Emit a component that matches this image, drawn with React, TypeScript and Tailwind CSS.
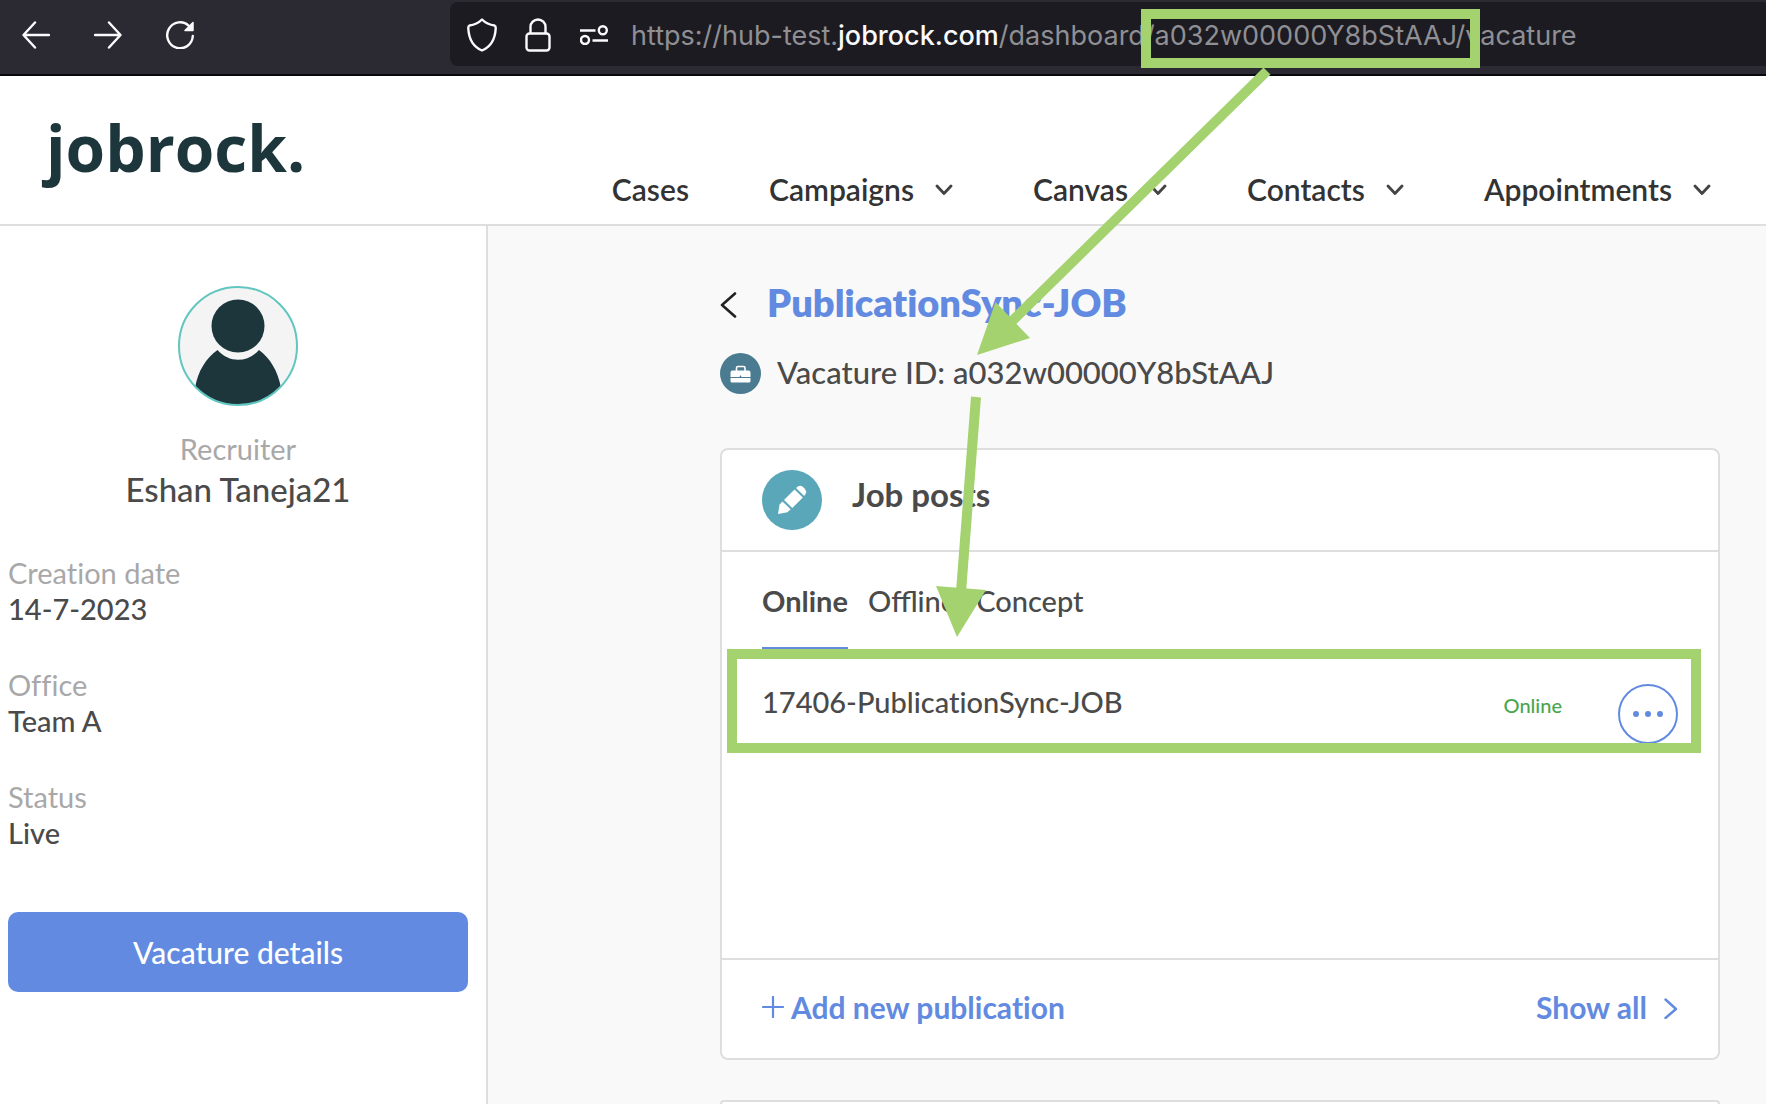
import { ReactNode } from "react";

interface NavItem {
  label: string;
  hasMenu?: boolean;
}

const navItems: NavItem[] = [
  { label: "Cases" },
  { label: "Campaigns", hasMenu: true },
  { label: "Canvas", hasMenu: true },
  { label: "Contacts", hasMenu: true },
  { label: "Appointments", hasMenu: true },
];

const details = [
  { label: "Creation date", value: "14-7-2023" },
  { label: "Office", value: "Team A" },
  { label: "Status", value: "Live" },
];

const tabs = ["Online", "Offline", "Concept"];

function BrowserButton({ label, children }: { label: string; children: ReactNode }) {
  return (
    <button type="button" aria-label={label} className="shrink-0">
      <svg
        viewBox="0 0 28 28"
        className="size-7"
        fill="none"
        stroke="#fbfbfe"
        strokeWidth="2.4"
        strokeLinecap="round"
        strokeLinejoin="round"
      >
        {children}
      </svg>
    </button>
  );
}

function BrowserBar() {
  return (
    <div className="flex border-b-2 border-[#09090c] bg-[#2b2a33] pt-0.5 pb-2 pl-[22px]">
      <div className="flex shrink-0 items-center gap-11 pt-0.5 pr-64">
        <BrowserButton label="Back">
          <path d="M27 14H2M13 1.500L1.500 14L13 26.500" />
        </BrowserButton>
        <BrowserButton label="Forward">
          <path d="M1 14H26M15 1.500L26.500 14L15 26.500" />
        </BrowserButton>
        <BrowserButton label="Reload">
          <path d="M26.800 15A12.800 13 0 1 1 23 5" />
          <path d="M27 1.500V9.500H19Z" fill="#fbfbfe" strokeWidth="1.500" />
        </BrowserButton>
      </div>
      <div className="flex h-16 min-w-0 flex-1 items-center rounded-l-lg bg-[#1c1b22] pt-0.5 pl-[17px]">
        <svg viewBox="0 0 30 34" className="h-[34px] w-[30px] shrink-0" fill="none" stroke="#fbfbfe" strokeWidth="2.400" strokeLinejoin="round">
          <path d="M15 1.500C11.500 5 6.500 7 2.500 7.500C1.500 8 1.200 9 1.300 10.500C1.800 20 5.500 28.500 15 32.500C24.500 28.500 28.200 20 28.700 10.500C28.800 9 28.500 8 27.500 7.500C23.500 7 18.500 5 15 1.500Z" />
        </svg>
        <svg viewBox="0 0 26 34" className="ml-7 h-[34px] w-[26px] shrink-0" fill="none" stroke="#fbfbfe" strokeWidth="2.400">
          <rect x="1.500" y="15.500" width="23" height="17" rx="3" />
          <path d="M5.500 15.500V9A7.500 7.500 0 0 1 20.500 9V15.500" />
        </svg>
        <svg viewBox="0 0 28 20" className="ml-[29px] h-5 w-7 shrink-0" fill="none" stroke="#fbfbfe" strokeWidth="2.400">
          <path d="M0 5.500H15.500M12.500 15.500H28" />
          <circle cx="22.800" cy="5.300" r="4" />
          <circle cx="5" cy="15" r="4" />
        </svg>
        <span className="ml-[23px] truncate pt-0.5 font-[Inter,sans-serif] text-[27px] leading-10 text-[#8f8f94]">
          https://hub-test.<span className="font-medium text-[#fbfbfe]">jobrock.com</span>
          /dashboard/a032w00000Y8bStAAJ/vacature
        </span>
      </div>
    </div>
  );
}

function Header() {
  return (
    <header className="flex items-end justify-between border-b-2 border-[#dedede] bg-white pt-10 pr-[55px] pb-[15px] pl-[46px]">
      <a href="#" className="mb-[29px] font-['Open_Sans',sans-serif] text-[64px] leading-[64px] font-bold text-[#1c363c]">
        jobrock.
      </a>
      <nav className="flex gap-20 text-[30px] leading-10 font-semibold text-[#333]">
        {navItems.map((item) => (
          <a key={item.label} href="#" className="flex items-center gap-[21px]">
            {item.label}
            {item.hasMenu && (
              <svg viewBox="0 0 18 12" className="h-3 w-[18px]" fill="none" stroke="#444" strokeWidth="2.800" strokeLinecap="round" strokeLinejoin="round">
                <path d="M2 3L9 10.500L16 3" />
              </svg>
            )}
          </a>
        ))}
      </nav>
    </header>
  );
}

function Avatar() {
  return (
    <svg viewBox="0 0 120 120" className="size-[120px]">
      <defs>
        <clipPath id="avatar">
          <circle cx="60" cy="60" r="59" />
        </clipPath>
      </defs>
      <circle cx="60" cy="60" r="59" fill="#f4f4f4" />
      <g clipPath="url(#avatar)" fill="#1c363c">
        <circle cx="60" cy="40" r="26.500" />
        <path d="M39.500 64C28 72 20 85 17 102V120H103V102C100 85 92 72 81 64C69 77 51 77 39.500 64Z" />
      </g>
      <circle cx="60" cy="60" r="59" fill="none" stroke="#62c6c0" strokeWidth="2" />
    </svg>
  );
}

function Sidebar() {
  return (
    <aside className="w-[488px] shrink-0 border-r-2 border-[#dedede] bg-white pt-[60px] pr-[18px] pl-2">
      <div className="flex flex-col items-center">
        <Avatar />
        <span className="mt-[23px] text-[29px] leading-10 text-[#a8a8a8]">Recruiter</span>
        <span className="text-[33px] leading-10 font-medium text-[#4a4a4a]">Eshan Taneja21</span>
      </div>
      <dl className="mt-[46px] flex flex-col gap-10 text-[29px] leading-9">
        {details.map((detail) => (
          <div key={detail.label}>
            <dt className="text-[#a8a8a8]">{detail.label}</dt>
            <dd className="font-medium text-[#4a4a4a]">{detail.value}</dd>
          </div>
        ))}
      </dl>
      <button type="button" className="mt-[61px] h-20 w-full rounded-[10px] bg-[#628ae0] text-[30px] leading-9 font-medium text-white">
        Vacature details
      </button>
    </aside>
  );
}

function JobPosts() {
  return (
    <section className="mt-[54px] rounded-lg border-2 border-[#dedede] bg-white">
      <div className="flex h-[102px] items-center gap-[30px] border-b-2 border-[#dedede] px-10">
        <svg viewBox="0 0 60 60" className="size-[60px]">
          <circle cx="30" cy="30" r="30" fill="#5aa7b9" />
          <g fill="white">
            <path d="M16 44L17.600 34.500L20.500 31.500L28.700 39.300L25.500 42.300Z" />
            <path d="M22 30L32.500 19.500L40.800 27.500L30.300 38Z" />
            <path d="M34 18L36 16.500Q38.500 15 41 17L43 19Q45 21.500 43.500 24L42.200 26Z" />
          </g>
        </svg>
        <h2 className="pb-3 text-[33px] leading-10 font-bold text-[#4a4a4a]">Job posts</h2>
      </div>
      <div className="flex gap-5 px-10 pt-[31px] text-[29px] leading-9 text-[#4a4a4a] [font-variant-ligatures:normal]">
        {tabs.map((tab, i) => (
          <button
            key={tab}
            type="button"
            className={
              i === 0
                ? "border-b-2 border-[#628ae0] pb-7 font-bold"
                : "border-b-2 border-transparent pb-7 font-medium"
            }
          >
            {tab}
          </button>
        ))}
      </div>
      <ul className="min-h-[309px] px-10 pt-[35px]">
        <li className="flex items-start">
          <a href="#" className="flex-1 text-[29px] leading-9 font-medium text-[#4a4a4a]">
            17406-PublicationSync-JOB
          </a>
          <span className="mt-[7px] text-xl leading-7 font-medium text-[#4aa54e]">Online</span>
          <button
            type="button"
            aria-label="More options"
            className="ml-14 flex size-[60px] items-center justify-center rounded-full border-2 border-[#628ae0]"
          >
            <svg viewBox="0 0 30 6" className="h-1.5 w-[30px]" fill="#628ae0">
              <circle cx="3" cy="3" r="3" />
              <circle cx="15" cy="3" r="3" />
              <circle cx="27" cy="3" r="3" />
            </svg>
          </button>
        </li>
      </ul>
      <div className="flex h-[100px] items-center justify-between border-t-2 border-[#dedede] px-10 pb-1 text-[30px] leading-9 font-bold text-[#628ae0]">
        <button type="button" className="flex items-center gap-[7px]">
          <svg viewBox="0 0 22 22" className="size-[22px]" stroke="#628ae0" strokeWidth="2.200" strokeLinecap="round">
            <path d="M1 11H21M11 1V21" />
          </svg>
          Add new publication
        </button>
        <a href="#" className="flex items-center gap-[17px]">
          Show all
          <svg viewBox="0 0 14 24" className="h-6 w-3.5" fill="none" stroke="#628ae0" strokeWidth="2.400" strokeLinecap="round" strokeLinejoin="round">
            <path d="M1.500 4.500L12 14L1.500 23" />
          </svg>
        </a>
      </div>
    </section>
  );
}

// Green markers that tie the id in the url to the vacature and its job post
function Annotations() {
  return (
    <svg
      viewBox="0 0 1766 1104"
      className="pointer-events-none absolute top-0 left-0 h-[1104px] w-[1766px] max-w-none"
      fill="none"
      stroke="#a3d26e"
      strokeWidth="10"
    >
      <rect x="1146" y="14" width="329" height="49" />
      <rect x="732" y="654" width="964" height="94" />
      <path d="M1267 71L1007 326M976 397L961 592" />
      <g fill="#a3d26e" stroke="none">
        <path d="M977 355L995.500 302L1030 338Z" />
        <path d="M957 637L936 586L986 590Z" />
      </g>
    </svg>
  );
}

export default function App() {
  return (
    <div className="relative flex min-h-screen flex-col overflow-hidden bg-[#f9f9f9] font-[Lato,sans-serif] [font-variant-ligatures:none]">
      <BrowserBar />
      <Header />
      <div className="flex flex-1">
        <Sidebar />
        <main className="flex min-w-0 flex-1 flex-col pt-[54px] pr-[46px] pl-[232px]">
          <div className="flex items-center gap-[30px]">
            <button type="button" aria-label="Go back" className="pt-1.5">
              <svg viewBox="0 0 17 26" className="h-[26px] w-[17px]" fill="none" stroke="#222" strokeWidth="2.600" strokeLinecap="round" strokeLinejoin="round">
                <path d="M15 1.500L2 13L15 24.500" />
              </svg>
            </button>
            <h1 className="text-[38px] leading-[44px] font-extrabold text-[#628ae0]">
              PublicationSync-JOB
            </h1>
          </div>
          <div className="mt-[29px] flex items-center gap-4">
            <svg viewBox="0 0 41 41" className="size-[41px]">
              <circle cx="20.500" cy="20.500" r="20.500" fill="#4b7b90" />
              <path d="M16.500 18V15Q16.500 13.500 18 13.500H23.500Q25 13.500 25 15V18" fill="none" stroke="white" strokeWidth="1.600" />
              <path d="M12.500 17.500H28.500Q30.500 17.500 30.500 19.500V24H21.500L20.500 22L19.500 24H10.500V19.500Q10.500 17.500 12.500 17.500ZM10.500 25H30.500V28Q30.500 29.500 29 29.500H12Q10.500 29.500 10.500 28Z" fill="white" />
            </svg>
            <p className="pb-1 text-[31px] leading-9 font-medium text-[#4a4a4a]">
              Vacature ID: a032w00000Y8bStAAJ
            </p>
          </div>
          <JobPosts />
          <section className="mt-10 flex-1 rounded-t-lg border-2 border-b-0 border-[#dedede] bg-white" />
        </main>
      </div>
      <Annotations />
    </div>
  );
}
